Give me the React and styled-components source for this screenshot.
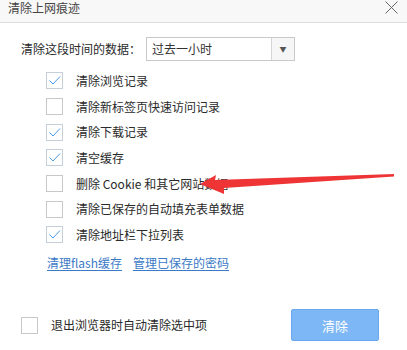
import React from "react";
import styled, { createGlobalStyle } from "styled-components";

const Global = createGlobalStyle`
  html, body { margin: 0; padding: 0; background: #fff; }
  body {
    font-family: "Noto Sans CJK SC", "Noto Sans", sans-serif;
    font-size: 12px;
    color: #333;
  }
`;

const Dialog = styled.div`
  position: relative;
  width: 407px;
  height: 350px;
  display: flex;
  flex-direction: column;
  background: #fff;
  overflow: hidden;
`;

const TitleBar = styled.div`
  height: 23px;
  display: flex;
  align-items: center;
  justify-content: space-between;
  padding: 0 9px 0 8px;
  background: #f8f8f8;
  border-bottom: 1px solid #dcdcdc;
  box-sizing: border-box;
`;

const Title = styled.span`
  font-size: 12px;
  line-height: 14px;
  color: #444;
  margin-top: -6px;
`;

const Close = styled.svg`
  width: 13px;
  height: 13px;
  margin-top: -8px;
`;

const Body = styled.div`
  padding: 14px 0 0 21px;
  display: flex;
  flex-direction: column;
`;

const RangeRow = styled.div`
  display: flex;
  align-items: center;
  gap: 5px;
  height: 24px;
`;

const Label = styled.span`
  width: 120px;
  line-height: 14px;
  color: #2a2a2a;
`;

const Select = styled.div`
  width: 149px;
  height: 24px;
  box-sizing: border-box;
  border: 1px solid #c9c9c9;
  display: flex;
  align-items: stretch;
  background: #fff;
`;

const SelectText = styled.span`
  flex: 1;
  padding-left: 5px;
  line-height: 22px;
  color: #333;
`;

const SelectButton = styled.span`
  width: 22px;
  border-left: 1px solid #d5d5d5;
  background: #f6f6f6;
  display: flex;
  align-items: center;
  justify-content: center;
  font-size: 7px;
  color: #555;
`;

const Options = styled.div`
  margin-top: 7px;
  padding-left: 25px;
  display: flex;
  flex-direction: column;
`;

const Row = styled.label`
  height: 25.7px;
  display: flex;
  align-items: center;
  gap: 13px;
  color: #2a2a2a;
  line-height: 14px;
`;

const Box = styled.span`
  width: 17px;
  height: 17px;
  box-sizing: border-box;
  border: 1px solid ${(p) => (p.$checked ? "#c4cfd9" : "#c8c8c8")};
  background: #fff;
  display: flex;
  align-items: center;
  justify-content: center;
  flex-shrink: 0;
`;

const Links = styled.div`
  display: flex;
  gap: 11px;
  margin-top: 8px;
  padding-left: 26px;
`;

const Link = styled.a`
  color: #3b7ac6;
  text-decoration: underline;
  text-underline-offset: 2px;
  line-height: 14px;
  cursor: pointer;
`;

const Footer = styled.div`
  margin-top: auto;
  display: flex;
  align-items: center;
  justify-content: space-between;
  padding: 0 28px 9px 21px;
`;

const FooterOption = styled(Row)`
  height: auto;
`;

const Button = styled.button`
  width: 88px;
  height: 32px;
  border: 1px solid #6aa8ee;
  border-radius: 2px;
  background: #7db7f6;
  color: #fff;
  font-family: inherit;
  font-size: 13px;
`;

const Arrow = styled.svg`
  position: absolute;
  left: 0;
  top: 0;
  pointer-events: none;
`;

function Check({ checked }) {
  return (
    <Box $checked={checked}>
      {checked && (
        <svg width="15" height="15" viewBox="0 0 15 15">
          <polyline
            points="2.5,7.5 6,11 13,3.5"
            fill="none"
            stroke="#4a9be6"
            strokeWidth="1"
          />
        </svg>
      )}
    </Box>
  );
}

const items = [
  ["清除浏览记录", true],
  ["清除新标签页快速访问记录", false],
  ["清除下载记录", true],
  ["清空缓存", true],
  ["删除 Cookie 和其它网站数据", false],
  ["清除已保存的自动填充表单数据", false],
  ["清除地址栏下拉列表", true],
];

export default function App() {
  return (
    <Dialog>
      <Global />
      <TitleBar>
        <Title>清除上网痕迹</Title>
        <Close viewBox="0 0 13 13">
          <path d="M0.5 0.5 L12.5 12.5 M12.5 0.5 L0.5 12.5" stroke="#666" strokeWidth="1" />
        </Close>
      </TitleBar>
      <Body>
        <RangeRow>
          <Label>清除这段时间的数据：</Label>
          <Select>
            <SelectText>过去一小时</SelectText>
            <SelectButton>▼</SelectButton>
          </Select>
        </RangeRow>
        <Options>
          {items.map(([text, checked]) => (
            <Row key={text}>
              <Check checked={checked} />
              {text}
            </Row>
          ))}
        </Options>
        <Links>
          <Link>清理flash缓存</Link>
          <Link>管理已保存的密码</Link>
        </Links>
      </Body>
      <Footer>
        <FooterOption>
          <Check checked={false} />
          退出浏览器时自动清除选中项
        </FooterOption>
        <Button>清除</Button>
      </Footer>
      <Arrow width="407" height="350" viewBox="0 0 407 350">
        <polygon
          points="200,184 216,175 215,180 394,174 394,176.5 224,188 224,194"
          fill="#ee3434"
        />
      </Arrow>
    </Dialog>
  );
}
